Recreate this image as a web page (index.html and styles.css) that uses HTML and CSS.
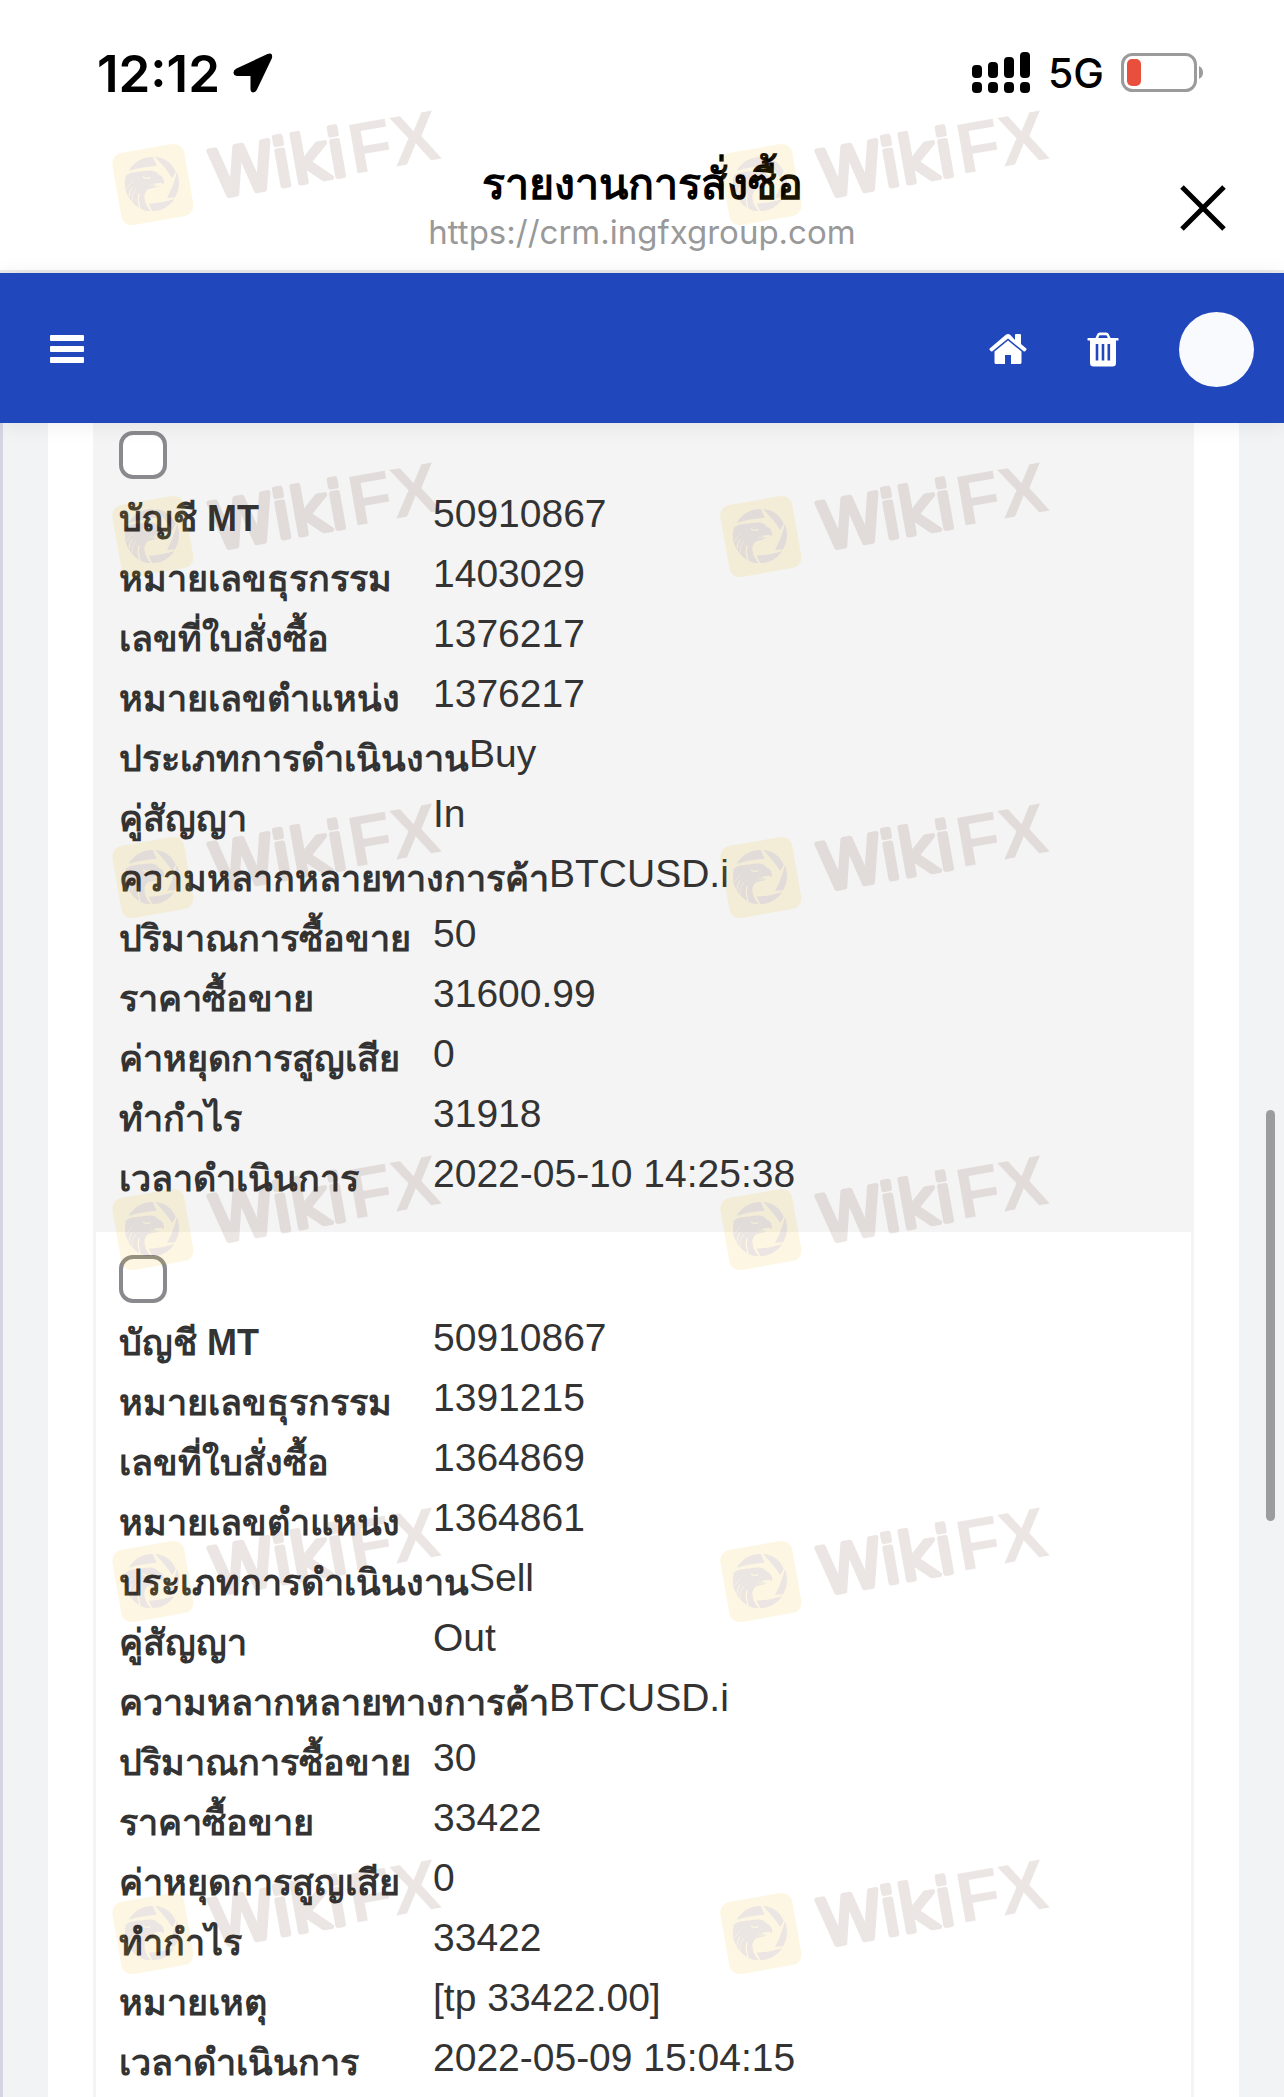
FILE: index.html
```html
<!DOCTYPE html>
<html lang="th">
<head>
    <meta charset="UTF-8">
    <meta name="viewport" content="width=device-width, initial-scale=1.0">
    <title>รายงานการสั่งซื้อ</title>
    <link rel="stylesheet" href="styles.css">
</head>
<body>
    <div class="status-bar">
        <div class="status-left">
            <span class="clock">12:12</span>
            <svg width="40" height="40" viewBox="0 0 40 40" aria-hidden="true">
                <path d="M34.500 1 Q40 -1 39 5 L24 36.500 Q22.500 39.500 20 39.500 Q17.500 39 17.500 36 L17.500 23 L4 23 Q0.500 22.500 0.500 19.500 Q0.500 17 3.500 15.500 Z" fill="#000"/>
            </svg>
        </div>
        <div class="status-right">
            <svg width="59" height="42" viewBox="0 0 59 42" aria-hidden="true">
                <rect x="0" y="13" width="10" height="13" rx="4"/>
                <rect x="16" y="10" width="10" height="16" rx="4"/>
                <rect x="32" y="5" width="10" height="21" rx="4"/>
                <rect x="48" y="0" width="10" height="26" rx="4"/>
                <rect x="0" y="30" width="10" height="11" rx="4"/>
                <rect x="16" y="30" width="10" height="11" rx="4"/>
                <rect x="32" y="30" width="10" height="11" rx="4"/>
                <rect x="48" y="30" width="10" height="11" rx="4"/>
            </svg>
            <span class="network">5G</span>
            <svg width="83" height="40" viewBox="0 0 83 40" aria-hidden="true">
                <rect x="1.500" y="1.500" width="73" height="36" rx="10" fill="#fff" stroke="#9b9b9b" stroke-width="3"/>
                <rect x="6" y="6" width="14" height="27" rx="5" fill="#e94f3d"/>
                <path d="M78 13 Q82 15 82 19.500 Q82 24 78 26 Z" fill="#9b9b9b"/>
            </svg>
        </div>
    </div>

    <header class="title-bar">
        <div class="title">
            <h1>รายงานการสั่งซื้อ</h1>
            <p>https://crm.ingfxgroup.com</p>
        </div>
        <button class="close" type="button" aria-label="ปิด">
            <svg width="46" height="46" viewBox="0 0 46 46">
                <path d="M2 2 L44 44 M44 2 L2 44" stroke="#000" stroke-width="5" fill="none"/>
            </svg>
        </button>
    </header>

    <nav class="navbar">
        <button type="button" aria-label="เมนู">
            <svg width="34" height="28" viewBox="0 0 34 28" fill="#fff">
                <rect x="0" y="0" width="34" height="6" rx="1"/>
                <rect x="0" y="11" width="34" height="6" rx="1"/>
                <rect x="0" y="22" width="34" height="6" rx="1"/>
            </svg>
        </button>
        <div class="nav-right">
            <a href="#" aria-label="หน้าแรก">
                <svg width="38" height="32" viewBox="0 0 38 32" fill="#fff">
                    <path d="M26 7 V2 Q26 1 27 1 H31 Q32 1 32 2 V11 L37.300 15.500 Q38 16.300 37.300 17 L36 18.300 Q35.300 18.800 34.600 18.200 L19 5.500 L3.400 18.200 Q2.700 18.800 2 18.300 L0.700 17 Q0 16.300 0.700 15.500 L16.800 1.800 Q19 0.200 21.200 1.800 Z"/>
                    <path d="M19 7.500 L32.500 18.500 V29.500 Q32.500 31 31 31 H22 V22 H16 V31 H7 Q5.500 31 5.500 29.500 V18.500 Z"/>
                </svg>
            </a>
            <button type="button" aria-label="ลบ">
                <svg width="32" height="35" viewBox="0 0 32 35" fill="#fff">
                    <path fill-rule="evenodd" d="M1 6 H8.500 L10.300 2 Q11 0.500 12.800 0.500 H19.200 Q21 0.500 21.700 2 L23.500 6 H31 Q31.500 6 31.500 6.500 V8 Q31.500 8.500 31 8.500 H29 V31 Q29 34.500 25.500 34.500 H6.500 Q3 34.500 3 31 V8.500 H1 Q0.500 8.500 0.500 8 V6.500 Q0.500 6 1 6 Z M11.200 6 H20.800 L19.800 3.700 Q19.600 3.200 19 3.200 H13 Q12.400 3.200 12.200 3.700 Z M8.700 12 V28.500 H11.300 V12 Z M14.700 12 V28.500 H17.300 V12 Z M20.500 12 V28.500 H23.100 V12 Z"/>
                </svg>
            </button>
            <a class="avatar" href="#" aria-label="บัญชีผู้ใช้"></a>
        </div>
    </nav>

    <main class="content">
        <div class="panel">
            <div class="orders">
                <section class="order order-odd">
                    <input type="checkbox" aria-label="1403029">
                    <table>
                        <tr><th scope="row">บัญชี MT</th><td>50910867</td></tr>
                        <tr><th scope="row">หมายเลขธุรกรรม</th><td>1403029</td></tr>
                        <tr><th scope="row">เลขที่ใบสั่งซื้อ</th><td>1376217</td></tr>
                        <tr><th scope="row">หมายเลขตำแหน่ง</th><td>1376217</td></tr>
                        <tr><th scope="row">ประเภทการดำเนินงาน</th><td>Buy</td></tr>
                        <tr><th scope="row">คู่สัญญา</th><td>In</td></tr>
                        <tr><th scope="row">ความหลากหลายทางการค้า</th><td>BTCUSD.i</td></tr>
                        <tr><th scope="row">ปริมาณการซื้อขาย</th><td>50</td></tr>
                        <tr><th scope="row">ราคาซื้อขาย</th><td>31600.99</td></tr>
                        <tr><th scope="row">ค่าหยุดการสูญเสีย</th><td>0</td></tr>
                        <tr><th scope="row">ทำกำไร</th><td>31918</td></tr>
                        <tr><th scope="row">เวลาดำเนินการ</th><td>2022-05-10 14:25:38</td></tr>
                    </table>
                </section>
                <section class="order">
                    <input type="checkbox" aria-label="1391215">
                    <table>
                        <tr><th scope="row">บัญชี MT</th><td>50910867</td></tr>
                        <tr><th scope="row">หมายเลขธุรกรรม</th><td>1391215</td></tr>
                        <tr><th scope="row">เลขที่ใบสั่งซื้อ</th><td>1364869</td></tr>
                        <tr><th scope="row">หมายเลขตำแหน่ง</th><td>1364861</td></tr>
                        <tr><th scope="row">ประเภทการดำเนินงาน</th><td>Sell</td></tr>
                        <tr><th scope="row">คู่สัญญา</th><td>Out</td></tr>
                        <tr><th scope="row">ความหลากหลายทางการค้า</th><td>BTCUSD.i</td></tr>
                        <tr><th scope="row">ปริมาณการซื้อขาย</th><td>30</td></tr>
                        <tr><th scope="row">ราคาซื้อขาย</th><td>33422</td></tr>
                        <tr><th scope="row">ค่าหยุดการสูญเสีย</th><td>0</td></tr>
                        <tr><th scope="row">ทำกำไร</th><td>33422</td></tr>
                        <tr><th scope="row">หมายเหตุ</th><td>[tp 33422.00]</td></tr>
                        <tr><th scope="row">เวลาดำเนินการ</th><td>2022-05-09 15:04:15</td></tr>
                    </table>
                </section>
            </div>
        </div>
        <div class="scroll-thumb"></div>
    </main>

    <!-- shared watermark logo -->
    <svg class="defs" width="0" height="0" aria-hidden="true">
        <symbol id="wm-logo" viewBox="0 0 288 288">
            <rect x="37" y="36" width="219" height="219" rx="32" fill="#f0b800" transform="rotate(-10 146.500 145.500)"/>
            <g fill="#521c0a">
                <path d="M74 105 C88 78 117 62 146 63 L158 89 C130 91 100 96 74 105 Z"/>
                <path d="M153 63 C184 66 206 83 215 107 L205 127 C190 103 172 82 153 63 Z"/>
                <path d="M219 108 C229 134 226 163 213 184 L189 186 C202 162 212 136 219 108 Z"/>
                <path d="M211 189 C196 212 171 226 145 225 L134 203 C160 202 186 197 211 189 Z"/>
                <path d="M66 118 C82 108 99 107 117 106 C135 101 158 103 165 117 C177 120 182 133 180 145 C171 138 158 143 148 143 C153 149 161 149 168 151 C152 157 134 154 126 166 C115 182 124 208 140 225 C122 226 108 219 97 210 C86 201 73 187 68 172 C61 154 61 135 66 118 Z"/>
            </g>
            <g stroke="#f0b800" fill="none" stroke-linecap="round">
                <path d="M118 123 Q127 130 138 125" stroke-width="4"/>
                <path d="M138 147 Q150 152 165 151" stroke-width="2"/>
                <path d="M84 155 Q76 167 75 183" stroke-width="3"/>
                <path d="M95 159 Q82 176 83 196" stroke-width="2"/>
                <path d="M105 173 Q100 192 108 217" stroke-width="4"/>
                <path d="M83 140 Q75 144 68 158" stroke-width="2"/>
            </g>
        </symbol>
    </svg>
    <div class="watermarks" aria-hidden="true">
        <svg class="watermark" viewBox="0 0 360 140"><use href="#wm-logo" x="12" y="28" width="96" height="96"/><text class="wiki" transform="translate(123 90) rotate(-10)">Wiki</text><text class="fx" transform="translate(261 66) rotate(-10)">FX</text></svg>
        <svg class="watermark" viewBox="0 0 360 140"><use href="#wm-logo" x="12" y="28" width="96" height="96"/><text class="wiki" transform="translate(123 90) rotate(-10)">Wiki</text><text class="fx" transform="translate(261 66) rotate(-10)">FX</text></svg>
        <svg class="watermark" viewBox="0 0 360 140"><use href="#wm-logo" x="12" y="28" width="96" height="96"/><text class="wiki" transform="translate(123 90) rotate(-10)">Wiki</text><text class="fx" transform="translate(261 66) rotate(-10)">FX</text></svg>
        <svg class="watermark" viewBox="0 0 360 140"><use href="#wm-logo" x="12" y="28" width="96" height="96"/><text class="wiki" transform="translate(123 90) rotate(-10)">Wiki</text><text class="fx" transform="translate(261 66) rotate(-10)">FX</text></svg>
        <svg class="watermark" viewBox="0 0 360 140"><use href="#wm-logo" x="12" y="28" width="96" height="96"/><text class="wiki" transform="translate(123 90) rotate(-10)">Wiki</text><text class="fx" transform="translate(261 66) rotate(-10)">FX</text></svg>
        <svg class="watermark" viewBox="0 0 360 140"><use href="#wm-logo" x="12" y="28" width="96" height="96"/><text class="wiki" transform="translate(123 90) rotate(-10)">Wiki</text><text class="fx" transform="translate(261 66) rotate(-10)">FX</text></svg>
        <svg class="watermark" viewBox="0 0 360 140"><use href="#wm-logo" x="12" y="28" width="96" height="96"/><text class="wiki" transform="translate(123 90) rotate(-10)">Wiki</text><text class="fx" transform="translate(261 66) rotate(-10)">FX</text></svg>
        <svg class="watermark" viewBox="0 0 360 140"><use href="#wm-logo" x="12" y="28" width="96" height="96"/><text class="wiki" transform="translate(123 90) rotate(-10)">Wiki</text><text class="fx" transform="translate(261 66) rotate(-10)">FX</text></svg>
        <svg class="watermark" viewBox="0 0 360 140"><use href="#wm-logo" x="12" y="28" width="96" height="96"/><text class="wiki" transform="translate(123 90) rotate(-10)">Wiki</text><text class="fx" transform="translate(261 66) rotate(-10)">FX</text></svg>
        <svg class="watermark" viewBox="0 0 360 140"><use href="#wm-logo" x="12" y="28" width="96" height="96"/><text class="wiki" transform="translate(123 90) rotate(-10)">Wiki</text><text class="fx" transform="translate(261 66) rotate(-10)">FX</text></svg>
        <svg class="watermark" viewBox="0 0 360 140"><use href="#wm-logo" x="12" y="28" width="96" height="96"/><text class="wiki" transform="translate(123 90) rotate(-10)">Wiki</text><text class="fx" transform="translate(261 66) rotate(-10)">FX</text></svg>
        <svg class="watermark" viewBox="0 0 360 140"><use href="#wm-logo" x="12" y="28" width="96" height="96"/><text class="wiki" transform="translate(123 90) rotate(-10)">Wiki</text><text class="fx" transform="translate(261 66) rotate(-10)">FX</text></svg>
    </div>
</body>
</html>
```

FILE: styles.css
```css
* {
    margin: 0;
    padding: 0;
    box-sizing: border-box;
}

body {
    position: relative;
    font-family: "Liberation Sans", Arial, sans-serif;
    color: #333;
    background: #fff;
}

svg {
    display: block;
}

button {
    background: none;
    border: none;
    cursor: pointer;
}

/* phone status bar */
.status-bar {
    display: flex;
    justify-content: space-between;
    align-items: center;
    height: 146px;
    padding: 0 80px 0 97px;
    font-family: Inter, sans-serif;
    color: #000;
}

.status-left,
.status-right {
    display: flex;
    align-items: center;
}

.status-left {
    gap: 13px;
}

.status-right {
    gap: 17px;
}

.clock {
    font-size: 51px;
    font-weight: 600;
}

.network {
    font-size: 41px;
    font-weight: 500;
}

/* in-app browser title */
.title-bar {
    display: grid;
    grid-template-columns: 1fr auto 1fr;
    align-items: center;
    height: 127px;
    padding: 0 58px;
    border-bottom: 3px solid #e9ebec;
}

.title {
    grid-column: 2;
    text-align: center;
}

.title h1 {
    font-size: 43px;
    line-height: 48px;
    color: #000;
}

.title p {
    font-family: Inter, sans-serif;
    font-size: 33px;
    line-height: 48px;
    color: #999;
}

.close {
    justify-self: end;
}

.navbar {
    position: relative;
    z-index: 1;
    display: flex;
    justify-content: space-between;
    align-items: center;
    height: 150px;
    padding: 2px 30px 0 50px;
    background: #2147bd;
    box-shadow: 0 2px 20px rgba(0, 0, 0, 0.08);
}

.nav-right {
    display: flex;
    align-items: center;
    gap: 60px;
}

.avatar {
    width: 75px;
    height: 75px;
    border-radius: 50%;
    background: #f9fafd;
}

.content {
    position: relative;
    padding: 0 45px;
    border-left: 3px solid #d4d5e3;
    background: #f1f3f5;
}

.panel {
    padding: 0 45px;
    background: #fff;
}

.orders {
    border: solid #f4f4f4;
    border-width: 0 3px;
}

.order {
    padding: 23px 23px 9px;
}

.order-odd {
    padding: 8px 23px 28px;
    background: #f4f4f4;
}

.order input {
    display: block;
    width: 48px;
    height: 48px;
    margin-bottom: 5px;
    border: 4px solid #8a8a8e;
    border-radius: 14px;
    background: #fff;
    appearance: none;
}

.order table,
.order tbody {
    display: block;
}

.order tr {
    display: flex;
}

.order th,
.order td {
    height: 60px;
    line-height: 60px;
    white-space: nowrap;
}

.order th {
    min-width: 314px;
    padding-top: 5px;
    font-size: 36px;
    text-align: left;
}

.order td {
    font-size: 39px;
}

.scroll-thumb {
    position: absolute;
    top: 687px;
    right: 9px;
    width: 9px;
    height: 411px;
    border-radius: 5px;
    background: #9b9c9e;
}

/* watermark overlay */
.defs {
    position: absolute;
}

.watermarks {
    position: absolute;
    top: 108px;
    left: 92px;
    z-index: 2;
    display: grid;
    grid-template-columns: 608px 360px;
    grid-template-rows: 352px 341px 352px 352px 352px 140px;
    pointer-events: none;
}

.watermark {
    width: 360px;
    height: 140px;
    overflow: visible;
    opacity: 0.11;
}

.watermark text {
    fill: #521c0a;
}

.watermark .wiki {
    font-family: "DejaVu Sans", sans-serif;
    font-size: 65px;
    stroke: #521c0a;
    stroke-width: 5px;
    stroke-linejoin: round;
}

.watermark .fx {
    font-size: 71px;
    font-weight: bold;
}
```
